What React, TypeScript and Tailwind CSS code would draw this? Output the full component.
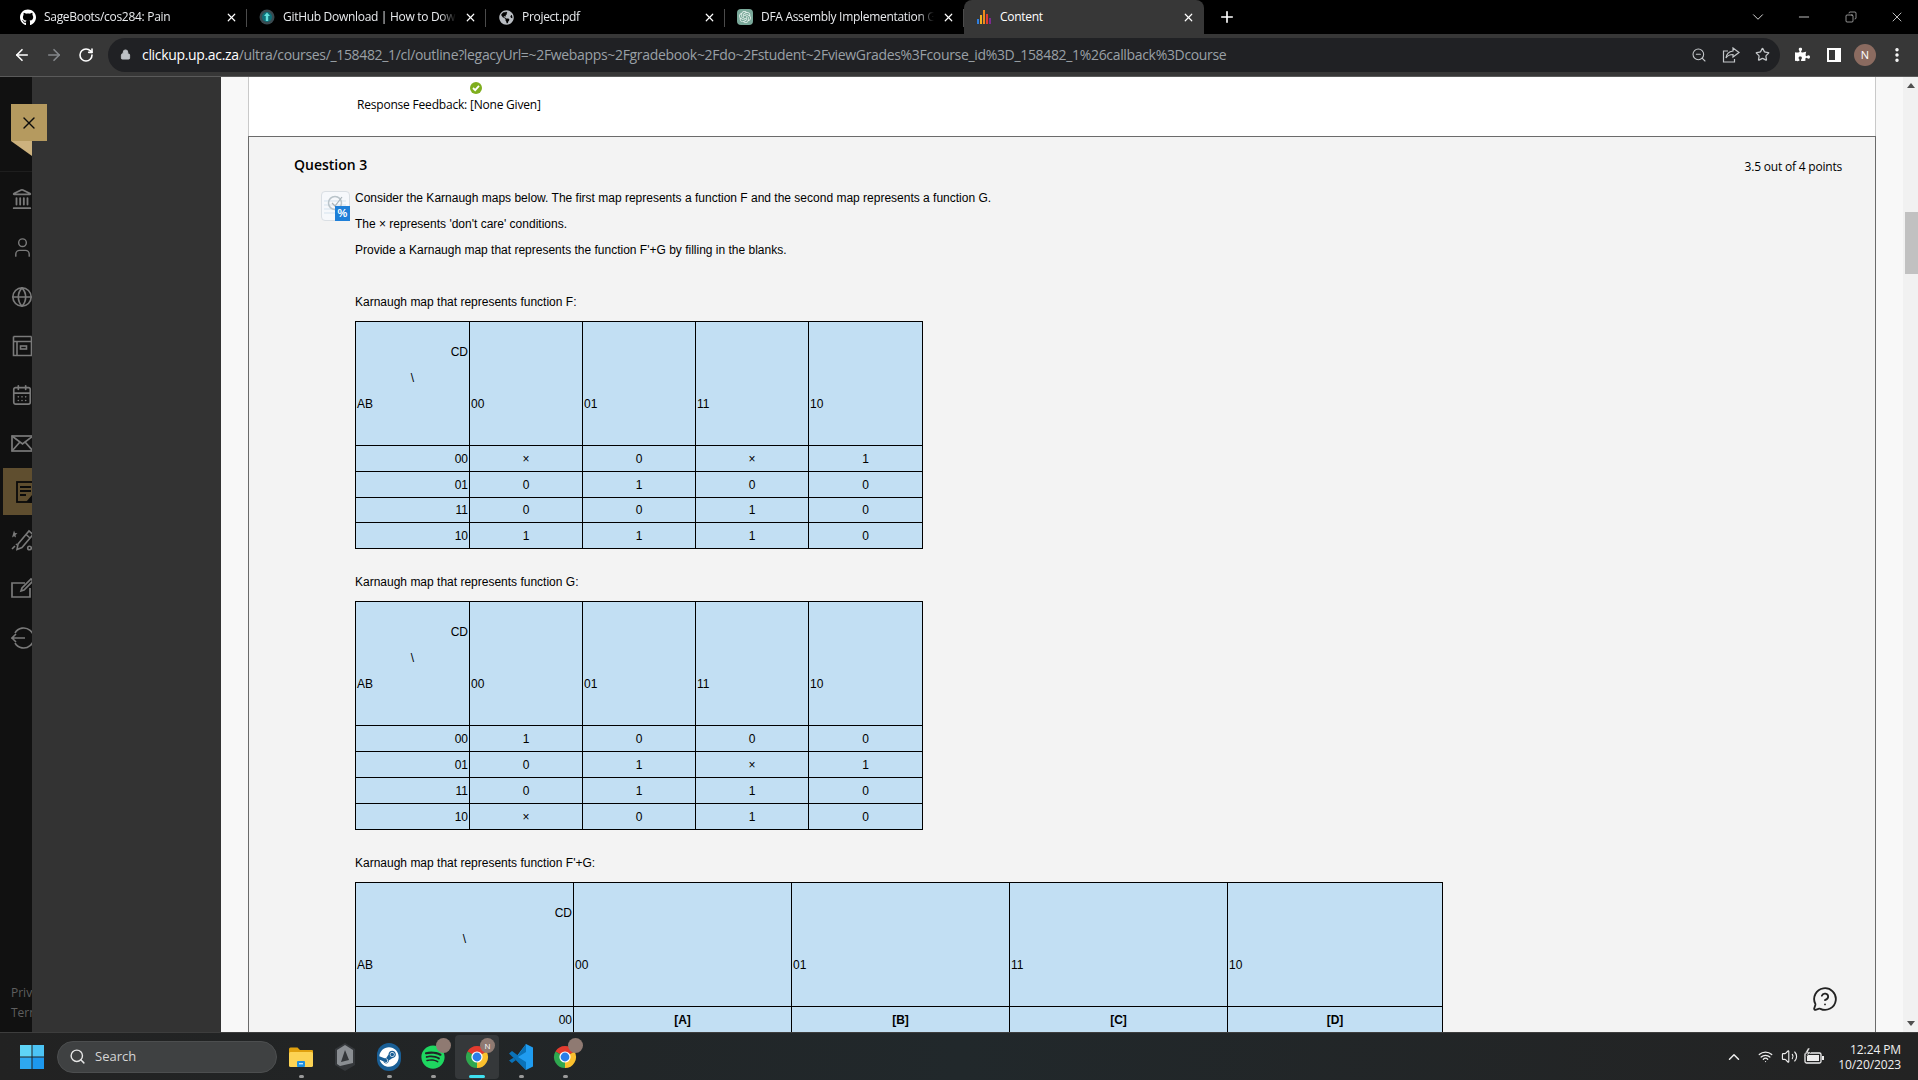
import {
  ArrowLeft,
  ArrowRight,
  RotateCw,
  Lock,
  ZoomOut,
  Star,
  MoreVertical,
  X,
  Plus,
  ChevronDown,
  ChevronUp,
  Minus,
  Landmark,
  User,
  Globe,
  CalendarDays,
  Search,
  Wifi,
  Volume2,
  MessageCircleQuestion,
  Copy,
} from 'lucide-react'
import { FaGithub, FaSteam, FaSpotify, FaPuzzlePiece, FaGlobeAmericas } from 'react-icons/fa'
import { SiOpenai } from 'react-icons/si'

const sans = "font-['Liberation_Sans',Arial,sans-serif]"
const open = "font-['Open_Sans',sans-serif]"

function ContentBars() {
  return (
    <svg width="16" height="16" viewBox="0 0 16 16">
      <rect x="1" y="10" width="2" height="5" fill="#2f7fe0" />
      <rect x="4" y="6" width="2" height="9" fill="#f2b01e" />
      <rect x="7" y="1" width="2" height="14" fill="#ef8a1d" />
      <rect x="10" y="5" width="2" height="10" fill="#e23b2e" />
      <rect x="13" y="9" width="2" height="6" fill="#7c2a90" />
    </svg>
  )
}

function DownloadFavicon() {
  return (
    <svg width="16" height="16" viewBox="0 0 16 16">
      <circle cx="8" cy="8" r="7.5" fill="#3a4a50" />
      <circle cx="8" cy="8" r="5" fill="#0e6f78" />
      <path d="M8 3.5 11 7H9.2v5H6.8V7H5z" fill="#63e0dc" />
    </svg>
  )
}

function ShareIcon() {
  return (
    <svg width="18" height="16" viewBox="0 0 18 16" fill="none" stroke="#c4c7ca" strokeWidth="1.2">
      <path d="M6 4H1.5v11h11v-3" />
      <path d="M11 1l6 4.5-6 4.5V7.5C8 7.5 5.5 8.5 4 11c.5-4 3-6.5 7-7z" />
    </svg>
  )
}

function ChromeIcon({ size = 24 }: { size?: number }) {
  return (
    <svg width={size} height={size} viewBox="0 0 24 24">
      <path d="M12 12 2.47 6.5A11 11 0 0 1 21.53 6.5z" fill="#e33b2e" />
      <path d="M12 12 21.53 6.5A11 11 0 0 1 12 23z" fill="#fbc02d" />
      <path d="M12 12 12 23A11 11 0 0 1 2.47 6.5z" fill="#2fa84f" />
      <circle cx="12" cy="12" r="5.6" fill="#fff" />
      <circle cx="12" cy="12" r="4.4" fill="#2b7de9" />
    </svg>
  )
}

function FolderIcon() {
  return (
    <svg width="26" height="26" viewBox="0 0 26 26">
      <path d="M1 5a1.5 1.5 0 0 1 1.5-1.5h7L12 6h12a1 1 0 0 1 1 1v3H1z" fill="#e0a10f" />
      <rect x="1" y="8" width="24" height="15" rx="1.5" fill="#fcd354" />
      <rect x="9" y="17" width="8" height="6" rx="1" fill="#1d8fe0" />
      <rect x="11" y="19" width="4" height="1.4" fill="#bfe6ff" />
    </svg>
  )
}

function HexIcon() {
  return (
    <svg width="22" height="30" viewBox="0 0 22 30">
      <path d="M11 1 21 7v16l-10 6-10-6V7z" fill="#34373a" />
      <path d="M11 3 19 8v13l-13 3-3-2V8z" fill="#8a8e92" />
      <path d="M11 8l4 10-8 2z" fill="#34373a" />
    </svg>
  )
}

function VsCodeIcon() {
  return (
    <svg width="26" height="28" viewBox="0 0 26 28">
      <path d="M18 1 25 4.5v19L18 27 7 15.5z" fill="#1f9cf0" />
      <path d="M18 1v8l-8 5 8 5v8L1 10.5 4 8l6 4.5zM1 17.5 4 20l4-3-2.5-2.2z" fill="#0a72b8" />
    </svg>
  )
}

function BatteryIcon() {
  return (
    <svg width="22" height="18" viewBox="0 0 22 18" fill="none">
      <rect x="2" y="5" width="16" height="10" rx="1.5" stroke="#eee" strokeWidth="1.3" />
      <rect x="4" y="7" width="12" height="6" fill="#eee" />
      <rect x="19" y="8" width="2" height="4" fill="#eee" />
      <path d="M5 0 2 5h3L3 9l5-5H5l2-4z" fill="#eee" stroke="#232323" strokeWidth="0.5" />
    </svg>
  )
}

function QuizIcon() {
  return (
    <div className="relative w-[29px] h-[30px] bg-[#f6f8fb] border border-[#dadfe4] rounded-sm mr-[5px] shrink-0">
      <svg width="27" height="28" viewBox="0 0 27 28">
        <path d="M2 9h22M2 13h22M2 17h22M2 21h22" stroke="#d5e3ee" strokeWidth="1" />
        <circle cx="13" cy="11" r="6.5" fill="none" stroke="#b9c3c9" strokeWidth="1.5" />
        <path d="m10 11 3 3 7-9" fill="none" stroke="#a9b4ba" strokeWidth="1.2" />
      </svg>
      <div className={`absolute right-[-1px] bottom-[-1px] w-[15px] h-[15px] bg-[#1e7fd8] text-white text-[11px] leading-[15px] font-bold text-center ${sans}`}>
        %
      </div>
    </div>
  )
}

const tabs = [
  { title: 'SageBoots/cos284: Pain', icon: <FaGithub size={17} color="#fff" /> },
  { title: 'GitHub Download | How to Download', icon: <DownloadFavicon /> },
  { title: 'Project.pdf', icon: <FaGlobeAmericas size={15} color="#b9bdc2" /> },
  {
    title: 'DFA Assembly Implementation Guide',
    icon: (
      <span className="w-4 h-4 rounded bg-[#7aa99a] flex items-center justify-center">
        <SiOpenai size={12} color="#e8f3ef" />
      </span>
    ),
  },
]

function TabBar() {
  return (
    <div className={`h-[34px] bg-black flex items-stretch pl-2 shrink-0 text-white text-[12px] ${open}`}>
      {tabs.map((t) => (
        <div key={t.title} className="w-[239px] flex items-center pl-3 pr-[8px] relative">
          <span className="w-4 flex justify-center shrink-0">{t.icon}</span>
          <span className="ml-2 flex-1 overflow-hidden whitespace-nowrap tracking-[-0.3px] text-[#e8eaed] [mask-image:linear-gradient(to_left,transparent,black_16px)]">
            {t.title}
          </span>
          <X size={13} color="#fff" strokeWidth={2.2} className="ml-2 mr-[1px] shrink-0" />
          <span className="absolute right-0 top-[9px] h-[18px] w-px bg-[#4b4b4b]" />
        </div>
      ))}
      <div className="w-[240px] flex items-center pl-3 pr-[8px] bg-[#373737] rounded-t-lg">
        <span className="w-4 flex justify-center shrink-0">
          <ContentBars />
        </span>
        <span className="ml-2 flex-1 tracking-[-0.3px]">Content</span>
        <X size={13} color="#fff" strokeWidth={2.2} className="ml-2 mr-[1px] shrink-0" />
      </div>
      <div className="ml-[14px] flex items-center">
        <Plus size={18} color="#fff" strokeWidth={2.2} />
      </div>
      <div className="flex-1" />
      <div className="flex items-center text-[#ececec]">
        <ChevronDown size={18} strokeWidth={1.2} />
        <Minus size={16} strokeWidth={1.2} className="ml-[29px]" />
        <Copy size={12} strokeWidth={1.2} className="ml-[33px] -scale-x-100" />
        <X size={16} strokeWidth={1.2} className="ml-[32px] mr-[13px]" />
      </div>
    </div>
  )
}

function Toolbar() {
  return (
    <div className="h-[43px] bg-[#373737] border-b border-[#5a5a5a] flex items-center shrink-0 pb-[1px]">
      <ArrowLeft size={18} color="#fff" strokeWidth={2.2} className="ml-[13px]" />
      <ArrowRight size={18} color="#85888c" strokeWidth={2.2} className="ml-[14px]" />
      <RotateCw size={16} color="#fff" strokeWidth={2.4} className="ml-[15px]" />
      <div className="ml-[14px] w-[1672px] h-[34px] bg-[#202124] rounded-full flex items-center">
        <Lock size={11} color="#bdc1c6" fill="#bdc1c6" className="ml-[12px]" />
        <span className={`ml-[11px] text-[14px] tracking-[-0.33px] whitespace-nowrap text-[#9aa0a6] ${open}`}>
          <span className="text-white">clickup.up.ac.za</span>
          /ultra/courses/_158482_1/cl/outline?legacyUrl=~2Fwebapps~2Fgradebook~2Fdo~2Fstudent~2FviewGrades%3Fcourse_id%3D_158482_1%26callback%3Dcourse
        </span>
        <div className="flex-1" />
        <ZoomOut size={16} color="#c4c7ca" strokeWidth={1.6} />
        <span className="ml-[15px]">
          <ShareIcon />
        </span>
        <Star size={15} color="#c4c7ca" strokeWidth={2} className="ml-[15px] mr-[10px]" />
      </div>
      <FaPuzzlePiece size={15} color="#fff" className="ml-[15px]" />
      <div className="ml-[17px] w-[14px] h-[14px] border-2 border-white border-r-[6px]" />
      <div className={`ml-[13px] w-[22px] h-[22px] rounded-full bg-[#8b6b60] text-white text-[11px] leading-[22px] text-center ${open}`}>N</div>
      <MoreVertical size={18} color="#fff" strokeWidth={2.6} className="ml-[12px]" />
    </div>
  )
}

function RailIcon({ children }: { children: React.ReactNode }) {
  return <div className="h-[49px] pl-[11px] flex items-center">{children}</div>
}

function Sidebar() {
  const c = '#7a7a7a'
  return (
    <div className="w-[221px] shrink-0 flex relative">
      <div className="w-[32px] bg-[#111111] overflow-hidden flex flex-col">
        <div className="h-[95px] border-b border-[#1e1e1e] shrink-0" />
        <div className="pt-[2px]">
          <RailIcon><Landmark size={22} color={c} strokeWidth={2} className="shrink-0" /></RailIcon>
          <RailIcon><User size={23} color={c} strokeWidth={1.5} className="shrink-0" /></RailIcon>
          <RailIcon><Globe size={22} color={c} strokeWidth={1.8} className="shrink-0" /></RailIcon>
          <RailIcon>
            <svg width="22" height="22" viewBox="0 0 22 22" fill="none" stroke={c} strokeWidth="1.6" className="shrink-0">
              <path d="M2.5 1.5h18M2.5 1.5v19h18v-19M2.5 6.5h18M6 6.5v14" />
              <rect x="9.5" y="11" width="6" height="3" />
            </svg>
          </RailIcon>
          <RailIcon><CalendarDays size={22} color={c} strokeWidth={1.8} className="shrink-0" /></RailIcon>
          <RailIcon>
            <svg width="23" height="17" viewBox="0 0 23 17" fill="none" stroke={c} strokeWidth="1.7" className="shrink-0">
              <rect x="1" y="1" width="21" height="15" />
              <path d="m1 1 10.5 8L22 1M1 16l7.5-8.5M22 16l-7.5-8.5" />
            </svg>
          </RailIcon>
          <div className="h-[47px] ml-[3px] bg-[#5f4e2f] pl-[13px] flex items-center">
            <svg width="22" height="22" viewBox="0 0 22 22" fill="none" stroke="#0b0b0b" strokeWidth="1.8" className="shrink-0">
              <rect x="1" y="1" width="18" height="20" />
              <path d="M4 6h11M4 10h11M4 14h6" />
              <path d="m12 20 7-8 2 2-6 7z" fill="#0b0b0b" />
            </svg>
          </div>
          <RailIcon>
            <svg width="24" height="24" viewBox="0 0 24 24" fill="none" stroke={c} strokeWidth="1.6" className="shrink-0">
              <path d="m7 16 11-13 4 3.5-11 13-5 2z" />
              <path d="m15 6.5 4 3.5" />
              <path d="M3 2.5 4 5l2.5.3-2 1.7.5 2.5-2-1.3-2 1.3" fill={c} stroke="none" />
              <path d="m1 21 3-3M5 17l1-1" />
              <circle cx="18.5" cy="20" r="1.8" />
            </svg>
          </RailIcon>
          <RailIcon>
            <svg width="24" height="24" viewBox="0 0 24 24" fill="none" stroke={c} strokeWidth="1.7" className="shrink-0">
              <path d="M14 6H1v14h18V11" />
              <path d="m10 14 1-3 9-9 2 2-9 9z" />
            </svg>
          </RailIcon>
          <RailIcon>
            <svg width="24" height="24" viewBox="0 0 24 24" fill="none" stroke={c} strokeWidth="1.6" className="shrink-0">
              <path d="M4 7a10 10 0 1 1 0 10" />
              <path d="M14 12H1l4-4M1 12l4 4" />
            </svg>
          </RailIcon>
        </div>
        <div className="flex-1" />
        <div className={`pl-[11px] pb-[9px] text-[12px] leading-[20px] text-[#5f5f5f] whitespace-nowrap ${open}`}>
          <div>Privacy</div>
          <div>Terms</div>
        </div>
      </div>
      <div className="flex-1 bg-[#333333]" />
      <div className="absolute left-[11px] top-[27px] w-[36px] h-[37px] bg-[#b59a5f] flex items-center justify-center">
        <X size={20} color="#0c0c0c" strokeWidth={1.6} />
      </div>
      <div className="absolute left-[11px] top-[64px] w-[21px] h-[15px] bg-[#cdb27e] [clip-path:polygon(0_0,100%_0,100%_100%)]" />
    </div>
  )
}

type KmapProps = {
  rows: string[][]
  top: string
  wide?: boolean
  tight?: boolean
}

function Kmap({ rows, top, wide, tight }: KmapProps) {
  const labels = ['00', '01', '11', '10']
  const rowLabels = ['00', '01', '11', '10']
  const first = wide ? 'w-[218px]' : 'w-[114px]'
  const other = wide ? 'w-[218px]' : 'w-[113px]'
  return (
    <table className={`table-fixed border-collapse text-[12px] leading-[14px] text-black ${wide ? 'w-[1088px]' : 'w-[568px]'}`}>
      <colgroup>
        <col className={first} />
        <col className={other} />
        <col className={other} />
        <col className={other} />
        <col />
      </colgroup>
      <tbody>
        <tr className={`bg-[#c2dff3] ${top}`}>
          <td className="border border-black align-top px-px">
            <div className="text-right mt-[23px]">CD</div>
            <div className="text-center mt-3">\</div>
            <div className="text-left mt-3">AB</div>
          </td>
          {labels.map((l) => (
            <td key={l} className="border border-black align-top px-px">
              <div className="mt-[75px]">{l}</div>
            </td>
          ))}
        </tr>
        {rows.map((r, i) => (
          <tr key={i} className={`bg-[#c2dff3] ${tight && i === 2 ? 'h-[25px]' : 'h-[26px]'}`}>
            <td className="border border-black text-right px-px">{rowLabels[i]}</td>
            {r.map((v, j) => (
              <td key={j} className={`border border-black text-center ${wide ? 'font-bold' : ''}`}>
                {v}
              </td>
            ))}
          </tr>
        ))}
      </tbody>
    </table>
  )
}

const mapF = [
  ['×', '0', '×', '1'],
  ['0', '1', '0', '0'],
  ['0', '0', '1', '0'],
  ['1', '1', '1', '0'],
]

const mapG = [
  ['1', '0', '0', '0'],
  ['0', '1', '×', '1'],
  ['0', '1', '1', '0'],
  ['×', '0', '1', '0'],
]

function Content() {
  return (
    <div className="flex-1 flex min-w-0 relative overflow-hidden bg-[#f8f8f8]">
      <div className="ml-[27px] flex-1 min-w-0 flex flex-col border-l border-[#c9c9c9]">
        <div className={`h-[59px] bg-white border-r border-[#c9c9c9] shrink-0 flex flex-col items-start pl-[108px] text-[12px] text-black ${open}`}>
          <svg width="12" height="12" viewBox="0 0 12 12" className="mt-[5px] ml-[113px]">
            <circle cx="6" cy="6" r="6" fill="#7fae1e" />
            <path d="m3 6 2.2 2.2L9 3.8" fill="none" stroke="#fff" strokeWidth="1.8" />
          </svg>
          <div className="mt-[2px] leading-[17px] tracking-[-0.2px]">Response Feedback: [None Given]</div>
        </div>
        <div className="flex-1 min-h-0 bg-[#f3f3f3] border-t border-r border-[#6b6b6b] -ml-px border-l pl-[45px] overflow-hidden">
          <div className="flex justify-between items-start pt-[18px] pr-[33px]">
            <div className={`text-[14px] leading-[20px] font-semibold text-black ${open}`}>Question 3</div>
            <div className={`text-[12px] leading-[20px] mt-[2px] text-black tracking-[-0.2px] ${open}`}>3.5 out of 4 points</div>
          </div>
          <div className={`flex items-start pl-[27px] mt-[6px] text-[12px] leading-[14px] text-black ${sans}`}>
            <div className="mt-[8px]">
              <QuizIcon />
            </div>
            <div>
              <p className="mt-[8px]">Consider the Karnaugh maps below. The first map represents a function F and the second map represents a function G.</p>
              <p className="mt-[12px]">The × represents 'don't care' conditions.</p>
              <p className="mt-[12px]">Provide a Karnaugh map that represents the function F'+G by filling in the blanks.</p>
              <p className="mt-[38px] mb-[12px]">Karnaugh map that represents function F:</p>
              <Kmap rows={mapF} top="h-[124px]" tight />
              <p className="mt-[26px] mb-[12px]">Karnaugh map that represents function G:</p>
              <Kmap rows={mapG} top="h-[124px]" />
              <p className="mt-[26px] mb-[12px]">Karnaugh map that represents function F'+G:</p>
              <Kmap wide rows={[['[A]', '[B]', '[C]', '[D]'], ['', '', '', '']]} top="h-[124px]" />
            </div>
          </div>
        </div>
      </div>
      <div className="w-[27px] shrink-0" />
      <div className="w-[15px] shrink-0 bg-[#f1f1f1] flex flex-col items-center">
        <div className="mt-[6px] w-0 h-0 border-x-[4px] border-x-transparent border-b-[5px] border-b-[#505050]" />
        <div className="mt-[124px] ml-[2px] w-[13px] h-[62px] bg-[#c1c1c1]" />
        <div className="flex-1" />
        <div className="mb-[6px] w-0 h-0 border-x-[4px] border-x-transparent border-t-[5px] border-t-[#505050]" />
      </div>
      <MessageCircleQuestion size={26} color="#222" strokeWidth={1.7} className="absolute right-[80px] bottom-[20px]" />
    </div>
  )
}

function TaskIcon({ children, dot, active }: { children: React.ReactNode; dot?: boolean; active?: boolean }) {
  return (
    <div className={`w-[44px] h-[44px] relative flex items-center justify-center rounded ${active ? 'bg-[#35383a]' : ''}`}>
      {children}
      {dot && <span className={`absolute bottom-[1px] h-[3px] rounded-full ${active ? 'w-[16px] bg-[#3fe0f0]' : 'w-[5px] bg-[#9a9a9a]'}`} />}
    </div>
  )
}

function Badge({ children }: { children?: React.ReactNode }) {
  return (
    <span className={`absolute right-[4px] top-[3px] w-[15px] h-[15px] rounded-full bg-[#8f7a72] text-white text-[8px] leading-[15px] text-center ${open}`}>
      {children}
    </span>
  )
}

function Taskbar() {
  return (
    <div className={`h-[48px] shrink-0 bg-gradient-to-r from-[#222222] via-[#21282b] to-[#232323] border-t border-[#3d3d3d] flex items-center text-white ${open}`}>
      <svg width="24" height="24" viewBox="0 0 24 24" className="ml-[20px]">
        <rect x="0" y="0" width="11.5" height="11.5" fill="#5fd4f7" />
        <rect x="12.5" y="0" width="11.5" height="11.5" fill="#4cc4f5" />
        <rect x="0" y="12.5" width="11.5" height="11.5" fill="#2ea8f0" />
        <rect x="12.5" y="12.5" width="11.5" height="11.5" fill="#1d98ee" />
      </svg>
      <div className="ml-[13px] w-[220px] h-[32px] rounded-full bg-[#3f4142] border border-[#4c4e4f] flex items-center text-[13px] text-[#d5d5d5]">
        <Search size={17} color="#e6e6e6" className="ml-[11px]" />
        <span className="ml-[9px]">Search</span>
      </div>
      <div className="ml-[2px] flex items-center">
        <TaskIcon dot><FolderIcon /></TaskIcon>
        <TaskIcon><HexIcon /></TaskIcon>
        <TaskIcon dot>
          <span className="w-[24px] h-[28px] rounded-full bg-[#1a5f96] flex items-center justify-center">
            <FaSteam size={20} color="#fff" />
          </span>
        </TaskIcon>
        <TaskIcon dot>
          <FaSpotify size={24} color="#1ed760" />
          <Badge />
        </TaskIcon>
        <TaskIcon dot active>
          <ChromeIcon />
          <Badge>N</Badge>
        </TaskIcon>
        <TaskIcon dot><VsCodeIcon /></TaskIcon>
        <TaskIcon dot>
          <ChromeIcon />
          <Badge />
        </TaskIcon>
      </div>
      <div className="flex-1" />
      <ChevronUp size={18} strokeWidth={2} color="#eee" />
      <Wifi size={15} strokeWidth={2} color="#eee" className="ml-[15px]" />
      <Volume2 size={17} strokeWidth={1.6} color="#eee" className="ml-[8px]" />
      <span className="ml-[5px]">
        <BatteryIcon />
      </span>
      <div className="ml-[13px] mr-[17px] text-[12px] leading-[15px] tracking-[-0.1px] text-right text-[#f0f0f0]">
        <div>12:24 PM</div>
        <div>10/20/2023</div>
      </div>
    </div>
  )
}

export default function App() {
  return (
    <div className="w-[1918px] h-[1080px] overflow-hidden flex flex-col">
      <TabBar />
      <Toolbar />
      <div className="flex-1 min-h-0 flex">
        <Sidebar />
        <Content />
      </div>
      <Taskbar />
    </div>
  )
}
